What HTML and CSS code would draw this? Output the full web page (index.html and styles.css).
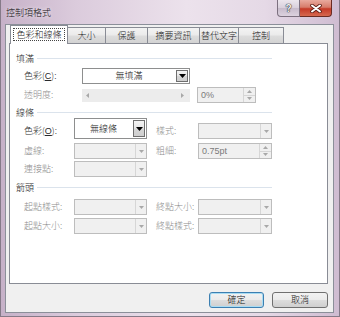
FILE: index.html
```html
<!DOCTYPE html>
<html lang="zh-Hant">
<head>
    <meta charset="UTF-8">
    <meta name="viewport" content="width=device-width, initial-scale=1.0">
    <title>控制項格式</title>
    <link rel="stylesheet" href="styles.css">
</head>
<body>
<div class="window">
    <div class="titlebar">
        <span class="title">控制項格式</span>
        <div class="caption">
            <div class="cap help">?</div>
            <div class="cap close">
                <svg width="12" height="9" viewBox="0 0 12 9">
                    <path d="M2 1.5L10 7.5M10 1.5L2 7.5" stroke="#5a1c14" stroke-width="3.6" stroke-linecap="round"/>
                    <path d="M2 1.5L10 7.5M10 1.5L2 7.5" stroke="#fff" stroke-width="2" stroke-linecap="round"/>
                </svg>
            </div>
        </div>
    </div>

    <div class="dialog">
        <div class="tabs">
            <div class="tab active"><span class="focus">色彩和線條</span></div>
            <div class="tab tab-size">大小</div>
            <div class="tab tab-lock">保護</div>
            <div class="tab tab-info">摘要資訊</div>
            <div class="tab tab-alt">替代文字</div>
            <div class="tab tab-ctrl">控制</div>
        </div>

        <div class="panel">
            <!-- 填滿 -->
            <div class="group"><span>填滿</span></div>
            <div class="row fill row-c">
                <label class="lbl fill-lbl">色彩(<u>C</u>):</label>
                <div class="combo wide">
                    <span class="value">無填滿</span>
                    <span class="drop"><svg width="7" height="4" viewBox="0 0 7 4"><path d="M0 0H7L3.5 4Z" fill="#000"/></svg></span>
                </div>
            </div>
            <div class="row fill row-alpha">
                <label class="lbl fill-lbl off">透明度:</label>
                <div class="slider">
                    <svg width="3" height="5" viewBox="0 0 3 5"><path d="M3 0V5L0 2.5Z" fill="#a8a8a8"/></svg>
                    <svg width="3" height="5" viewBox="0 0 3 5"><path d="M0 0V5L3 2.5Z" fill="#a8a8a8"/></svg>
                </div>
                <div class="spin pct">
                    <span class="num">0%</span>
                    <span class="spin-btns">
                        <b><svg width="5" height="3" viewBox="0 0 5 3"><path d="M0 3H5L2.5 0Z" fill="#a8a8a8"/></svg></b>
                        <b><svg width="5" height="3" viewBox="0 0 5 3"><path d="M0 0H5L2.5 3Z" fill="#a8a8a8"/></svg></b>
                    </span>
                </div>
            </div>

            <!-- 線條 -->
            <div class="group g-line"><span>線條</span></div>
            <div class="row line row-o">
                <label class="lbl">色彩(<u>O</u>):</label>
                <div class="combo tall">
                    <span class="value">無線條</span>
                    <span class="drop"><svg width="7" height="4" viewBox="0 0 7 4"><path d="M0 0H7L3.5 4Z" fill="#000"/></svg></span>
                </div>
                <label class="lbl right off">樣式:</label>
                <div class="combo off r-box">
                    <span class="value"></span>
                    <span class="drop"><svg width="5" height="3" viewBox="0 0 5 3"><path d="M0 0H5L2.5 3Z" fill="#a8a8a8"/></svg></span>
                </div>
            </div>
            <div class="row line row-dash">
                <label class="lbl off">虛線:</label>
                <div class="combo off">
                    <span class="value"></span>
                    <span class="drop"><svg width="5" height="3" viewBox="0 0 5 3"><path d="M0 0H5L2.5 3Z" fill="#a8a8a8"/></svg></span>
                </div>
                <label class="lbl right off">粗細:</label>
                <div class="spin r-box">
                    <span class="num">0.75pt</span>
                    <span class="spin-btns">
                        <b><svg width="5" height="3" viewBox="0 0 5 3"><path d="M0 3H5L2.5 0Z" fill="#a8a8a8"/></svg></b>
                        <b><svg width="5" height="3" viewBox="0 0 5 3"><path d="M0 0H5L2.5 3Z" fill="#a8a8a8"/></svg></b>
                    </span>
                </div>
            </div>
            <div class="row line row-join">
                <label class="lbl off">連接點:</label>
                <div class="combo off">
                    <span class="value"></span>
                    <span class="drop"><svg width="5" height="3" viewBox="0 0 5 3"><path d="M0 0H5L2.5 3Z" fill="#a8a8a8"/></svg></span>
                </div>
            </div>

            <!-- 箭頭 -->
            <div class="group g-arrow"><span>箭頭</span></div>
            <div class="row line row-s1">
                <label class="lbl off">起點樣式:</label>
                <div class="combo off">
                    <span class="value"></span>
                    <span class="drop"><svg width="5" height="3" viewBox="0 0 5 3"><path d="M0 0H5L2.5 3Z" fill="#a8a8a8"/></svg></span>
                </div>
                <label class="lbl right off">終點大小:</label>
                <div class="combo off r-box">
                    <span class="value"></span>
                    <span class="drop"><svg width="5" height="3" viewBox="0 0 5 3"><path d="M0 0H5L2.5 3Z" fill="#a8a8a8"/></svg></span>
                </div>
            </div>
            <div class="row line row-s2">
                <label class="lbl off">起點大小:</label>
                <div class="combo off">
                    <span class="value"></span>
                    <span class="drop"><svg width="5" height="3" viewBox="0 0 5 3"><path d="M0 0H5L2.5 3Z" fill="#a8a8a8"/></svg></span>
                </div>
                <label class="lbl right off">終點樣式:</label>
                <div class="combo off r-box">
                    <span class="value"></span>
                    <span class="drop"><svg width="5" height="3" viewBox="0 0 5 3"><path d="M0 0H5L2.5 3Z" fill="#a8a8a8"/></svg></span>
                </div>
            </div>
        </div>

        <div class="footer">
            <button class="btn ok">確定</button>
            <button class="btn cancel">取消</button>
        </div>
    </div>
</div>
</body>
</html>
```

FILE: styles.css
```css
* {
    box-sizing: border-box;
}
html, body {
    margin: 0;
    padding: 0;
}
body {
    width: 340px;
    height: 317px;
    overflow: hidden;
    font-family: "Noto Sans CJK TC", "Liberation Sans", sans-serif;
    font-size: 9px;
    font-weight: 300;
    color: #2a2a2a;
}
.window {
    width: 340px;
    height: 317px;
    display: flex;
    flex-direction: column;
    padding: 0 5px 3px 4px;
    background: linear-gradient(90deg, #c6b1c8 0%, #dbcbdc 22%, #ece2ec 55%, #e5d9e6 78%, #cfbcd1 100%);
    border: 1px solid #857a88;
    border-top: none;
}
.titlebar {
    height: 24px;
    display: flex;
    justify-content: space-between;
    align-items: flex-start;
}
.title {
    padding-top: 8px;
    padding-left: 1px;
    line-height: 10px;
    color: #111;
    text-shadow: 0 0 4px #fff;
}
.caption {
    display: flex;
    margin-right: 2px;
}
.cap {
    height: 17px;
    display: flex;
    align-items: center;
    justify-content: center;
}
.help {
    width: 23px;
    border: 1px solid #7c707f;
    border-top: none;
    border-radius: 0 0 0 4px;
    background: linear-gradient(#ece6ed, #d9d0dc 48%, #c7bbcb 52%, #dcd2de);
    font-family: "Liberation Sans", sans-serif;
    font-weight: bold;
    font-size: 10px;
    color: #f4f4f4;
    text-shadow: 0 0 1px #333, 0 0 1px #333, 0 0 1px #333;
}
.close {
    width: 32px;
    border: 1px solid #6b2b22;
    border-left: none;
    border-top: none;
    border-radius: 0 0 4px 0;
    background: linear-gradient(#e9aa9e, #d77c6b 45%, #c53a27 55%, #d6684f);
}
.dialog {
    flex: 1;
    display: flex;
    flex-direction: column;
    padding: 0 5px 0 3px;
    background: #f0f0f0;
    border: 1px solid #8b8f99;
}
.tabs {
    height: 18px;
    display: flex;
    align-items: flex-end;
    padding-left: 2px;
}
.tab {
    height: 16px;
    margin-left: -1px;
    border: 1px solid #898c95;
    border-bottom: none;
    background: linear-gradient(#f3f3f3, #ebebeb 48%, #dddddd 52%, #d3d3d3);
    display: flex;
    align-items: center;
    justify-content: center;
    line-height: 12px;
    color: #1a1a1a;
}
.tab.active {
    width: 58px;
    height: 19px;
    margin-bottom: -1px;
    background: #fff;
    position: relative;
    z-index: 1;
    align-items: flex-start;
    padding-top: 2px;
}
.focus {
    border: 1px dotted #444;
    padding: 0 2px;
    line-height: 11px;
}
.tab-size { width: 39px; }
.tab-lock { width: 43px; }
.tab-info { width: 53px; }
.tab-alt { width: 40px; }
.tab-ctrl { width: 46px; }
.panel {
    height: 241px;
    background: #fff;
    border: 1px solid #898c95;
}
.group {
    width: 256px;
    height: 11px;
    margin: 9px 0 0 6px;
    display: flex;
    align-items: center;
    gap: 3px;
    line-height: 11px;
    color: #1a1a1a;
}
.group::after {
    content: "";
    flex: 1;
    height: 1px;
    background: #dbe3ec;
}
.g-line {
    margin-top: 4px;
}
.g-arrow {
    margin-top: 5px;
}
.row {
    display: flex;
    align-items: center;
    padding-left: 14px;
    height: 16px;
}
.lbl {
    line-height: 16px;
    color: #2a2a2a;
}
.lbl u {
    font-family: "Liberation Sans", sans-serif;
}
.lbl.off {
    color: #8d8d8d;
}
.fill-lbl {
    width: 58px;
}
.line .lbl {
    width: 50px;
}
.line .lbl.right {
    width: 42px;
    margin-left: 9px;
}
.row-c { margin-top: 4px; }
.row-alpha { margin-top: 3px; }
.row-o {
    margin-top: 0;
    height: 21px;
    align-items: flex-end;
}
.row-dash { margin-top: 4px; }
.row-join { margin-top: 2px; }
.row-s1 { margin-top: 6px; }
.row-s2 { margin-top: 3px; }
.combo {
    width: 73px;
    height: 16px;
    display: flex;
    background: #fff;
    border: 1px solid #8e8f8f;
}
.combo.wide {
    width: 108px;
}
.combo.tall {
    height: 21px;
}
.combo .value {
    flex: 1;
    text-align: center;
    align-self: center;
    line-height: 12px;
    color: #111;
}
.combo .drop {
    width: 12px;
    margin: 1px;
    border: 1px solid #6f6f6f;
    background: linear-gradient(#f4f4f4, #e6e6e6 48%, #d6d6d6 52%, #cfcfcf);
    display: flex;
    align-items: center;
    justify-content: center;
}
.combo.off {
    background: #f0f0f0;
    border-color: #bdbdbd;
}
.combo.off .drop {
    margin: 0;
    width: 11px;
    border: none;
    border-left: 1px solid #d6d6d6;
    background: #f0f0f0;
}
.r-box {
    width: 74px;
}
.slider {
    width: 108px;
    height: 13px;
    background: #ececec;
    display: flex;
    align-items: center;
    justify-content: space-between;
    padding: 0 6px 0 4px;
}
.spin {
    height: 16px;
    display: flex;
    background: #f0f0f0;
    border: 1px solid #bdbdbd;
}
.spin.pct {
    width: 59px;
    margin-left: 7px;
}
.spin .num {
    flex: 1;
    padding-left: 3px;
    font-family: "Liberation Sans", sans-serif;
    line-height: 14px;
    color: #7a7a7a;
}
.spin-btns {
    width: 12px;
    display: flex;
    flex-direction: column;
    border-left: 1px solid #d6d6d6;
}
.spin-btns b {
    flex: 1;
    display: flex;
    align-items: center;
    justify-content: center;
}
.spin-btns b + b {
    border-top: 1px solid #d6d6d6;
}
.footer {
    display: flex;
    justify-content: flex-end;
    gap: 8px;
    margin-top: 8px;
}
.btn {
    height: 16px;
    padding: 0;
    border: 1px solid #707070;
    border-radius: 3px;
    background: linear-gradient(#f2f2f2, #ebebeb 48%, #dddddd 52%, #cfcfcf);
    font-family: "Noto Sans CJK TC", sans-serif;
    font-size: 9px;
    font-weight: 300;
    line-height: 12px;
    color: #111;
}
.ok {
    width: 55px;
    border-color: #3c7fb1;
    box-shadow: inset 0 0 0 1px #a8dcf3;
}
.cancel {
    width: 56px;
}
```
